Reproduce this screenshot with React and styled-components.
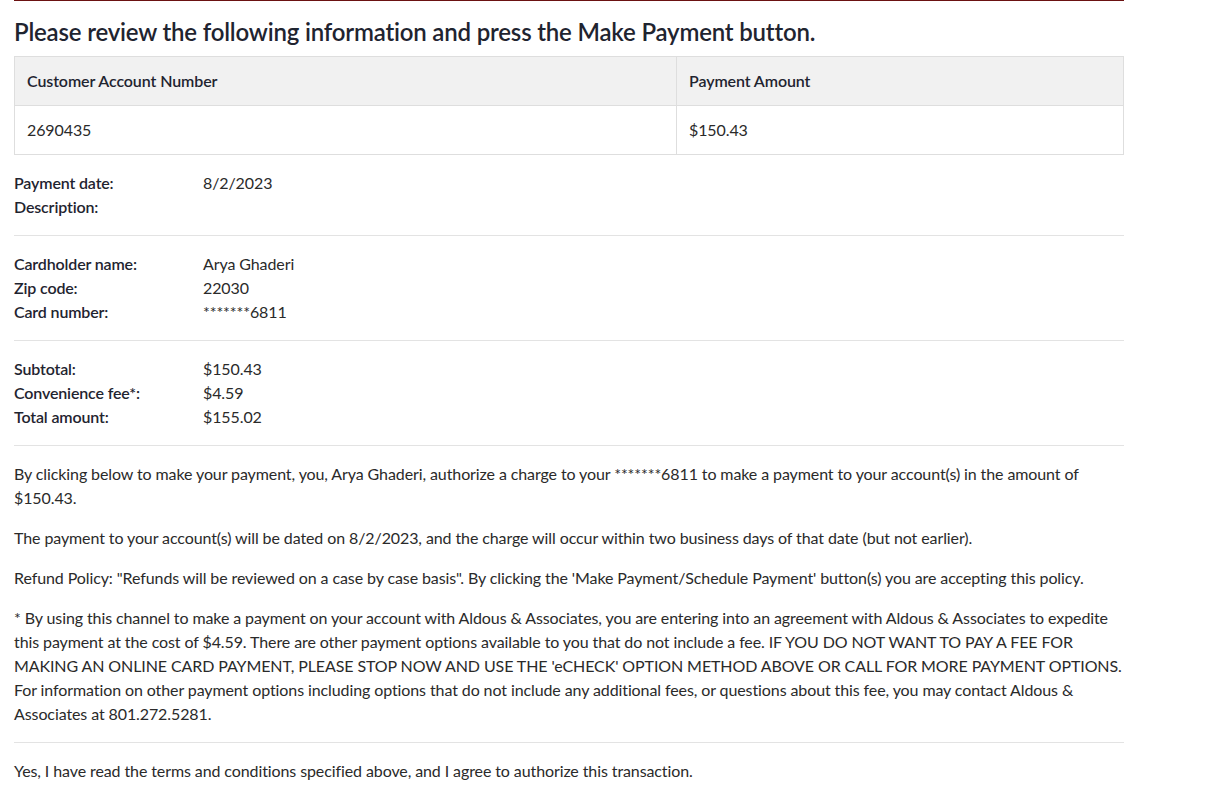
import React from "react";
import styled, { createGlobalStyle } from "styled-components";

const Global = createGlobalStyle`
  html, body { margin: 0; padding: 0; background: #fff; }
  body {
    font-family: Lato, "Open Sans", sans-serif;
    color: #2a2a2a;
    font-size: 16px;
    letter-spacing: -0.1px;
  }
`;

const Page = styled.div`
  width: 1110px;
  margin-left: 14px;
  border-top: 1px solid #6b1212;
`;

const Title = styled.h1`
  margin: 15px 0 8px;
  font-family: "Lato Semibold", Lato, sans-serif;
  font-size: 24px;
  line-height: 32px;
  font-weight: 600;
  color: #1f2430;
  letter-spacing: -0.18px;
`;

const Table = styled.table`
  width: 100%;
  border-collapse: collapse;
  table-layout: fixed;
  font-size: 16px;
`;

const Th = styled.th`
  text-align: left;
  font-family: "Lato Semibold", Lato, sans-serif;
  font-weight: 600;
  background: #f1f1f1;
  border: 1px solid #dedede;
  padding: 12px 12px;
  line-height: 24px;
  color: #1f2430;
  letter-spacing: -0.1px;
`;

const Td = styled.td`
  border: 1px solid #dedede;
  padding: 12px 12px;
  line-height: 24px;
`;

const InfoGroup = styled.div`
  display: grid;
  grid-template-columns: 189px 1fr;
  padding: 16px 0;
  line-height: 24px;
`;

const Label = styled.div`
  font-family: "Lato Semibold", Lato, sans-serif;
  font-weight: 600;
  color: #1f2430;
  letter-spacing: -0.15px;
`;

const Value = styled.div``;

const Rule = styled.hr`
  border: 0;
  border-top: 1px solid #e3e3e3;
  margin: 0;
`;

const Text = styled.div`
  padding: 16px 0;
  line-height: 24px;
`;

const P = styled.p`
  margin: 0 0 16px;
  &:last-child { margin-bottom: 0; }
`;

const groups = [
  [["Payment date:", "8/2/2023"], ["Description:", ""]],
  [
    ["Cardholder name:", "Arya Ghaderi"],
    ["Zip code:", "22030"],
    ["Card number:", "*******6811"],
  ],
  [
    ["Subtotal:", "$150.43"],
    ["Convenience fee*:", "$4.59"],
    ["Total amount:", "$155.02"],
  ],
];

export default function App() {
  return (
    <>
      <Global />
      <Page>
        <Title>Please review the following information and press the Make Payment button.</Title>
        <Table>
          <colgroup>
            <col style={{ width: "662px" }} />
            <col />
          </colgroup>
          <thead>
            <tr>
              <Th>Customer Account Number</Th>
              <Th>Payment Amount</Th>
            </tr>
          </thead>
          <tbody>
            <tr>
              <Td>2690435</Td>
              <Td>$150.43</Td>
            </tr>
          </tbody>
        </Table>
        {groups.map((g, i) => (
          <React.Fragment key={i}>
            {i > 0 && <Rule />}
            <InfoGroup>
              {g.map(([l, v]) => (
                <React.Fragment key={l}>
                  <Label>{l}</Label>
                  <Value>{v}</Value>
                </React.Fragment>
              ))}
            </InfoGroup>
          </React.Fragment>
        ))}
        <Rule />
        <Text>
          <P>
            By clicking below to make your payment, you, Arya Ghaderi, authorize a charge to your *******6811 to make a payment to your account(s) in the amount of $150.43.
          </P>
          <P>
            The payment to your account(s) will be dated on 8/2/2023, and the charge will occur within two business days of that date (but not earlier).
          </P>
          <P>
            Refund Policy: "Refunds will be reviewed on a case by case basis". By clicking the 'Make Payment/Schedule Payment' button(s) you are accepting this policy.
          </P>
          <P>
            * By using this channel to make a payment on your account with Aldous &amp; Associates, you are entering into an agreement with Aldous &amp; Associates to expedite this payment at the cost of $4.59. There are other payment options available to you that do not include a fee. IF YOU DO NOT WANT TO PAY A FEE FOR MAKING AN ONLINE CARD PAYMENT, PLEASE STOP NOW AND USE THE 'eCHECK' OPTION METHOD ABOVE OR CALL FOR MORE PAYMENT OPTIONS. For information on other payment options including options that do not include any additional fees, or questions about this fee, you may contact Aldous &amp; Associates at 801.272.5281.
          </P>
        </Text>
        <Rule />
        <Text>
          <P>Yes, I have read the terms and conditions specified above, and I agree to authorize this transaction.</P>
        </Text>
      </Page>
    </>
  );
}
